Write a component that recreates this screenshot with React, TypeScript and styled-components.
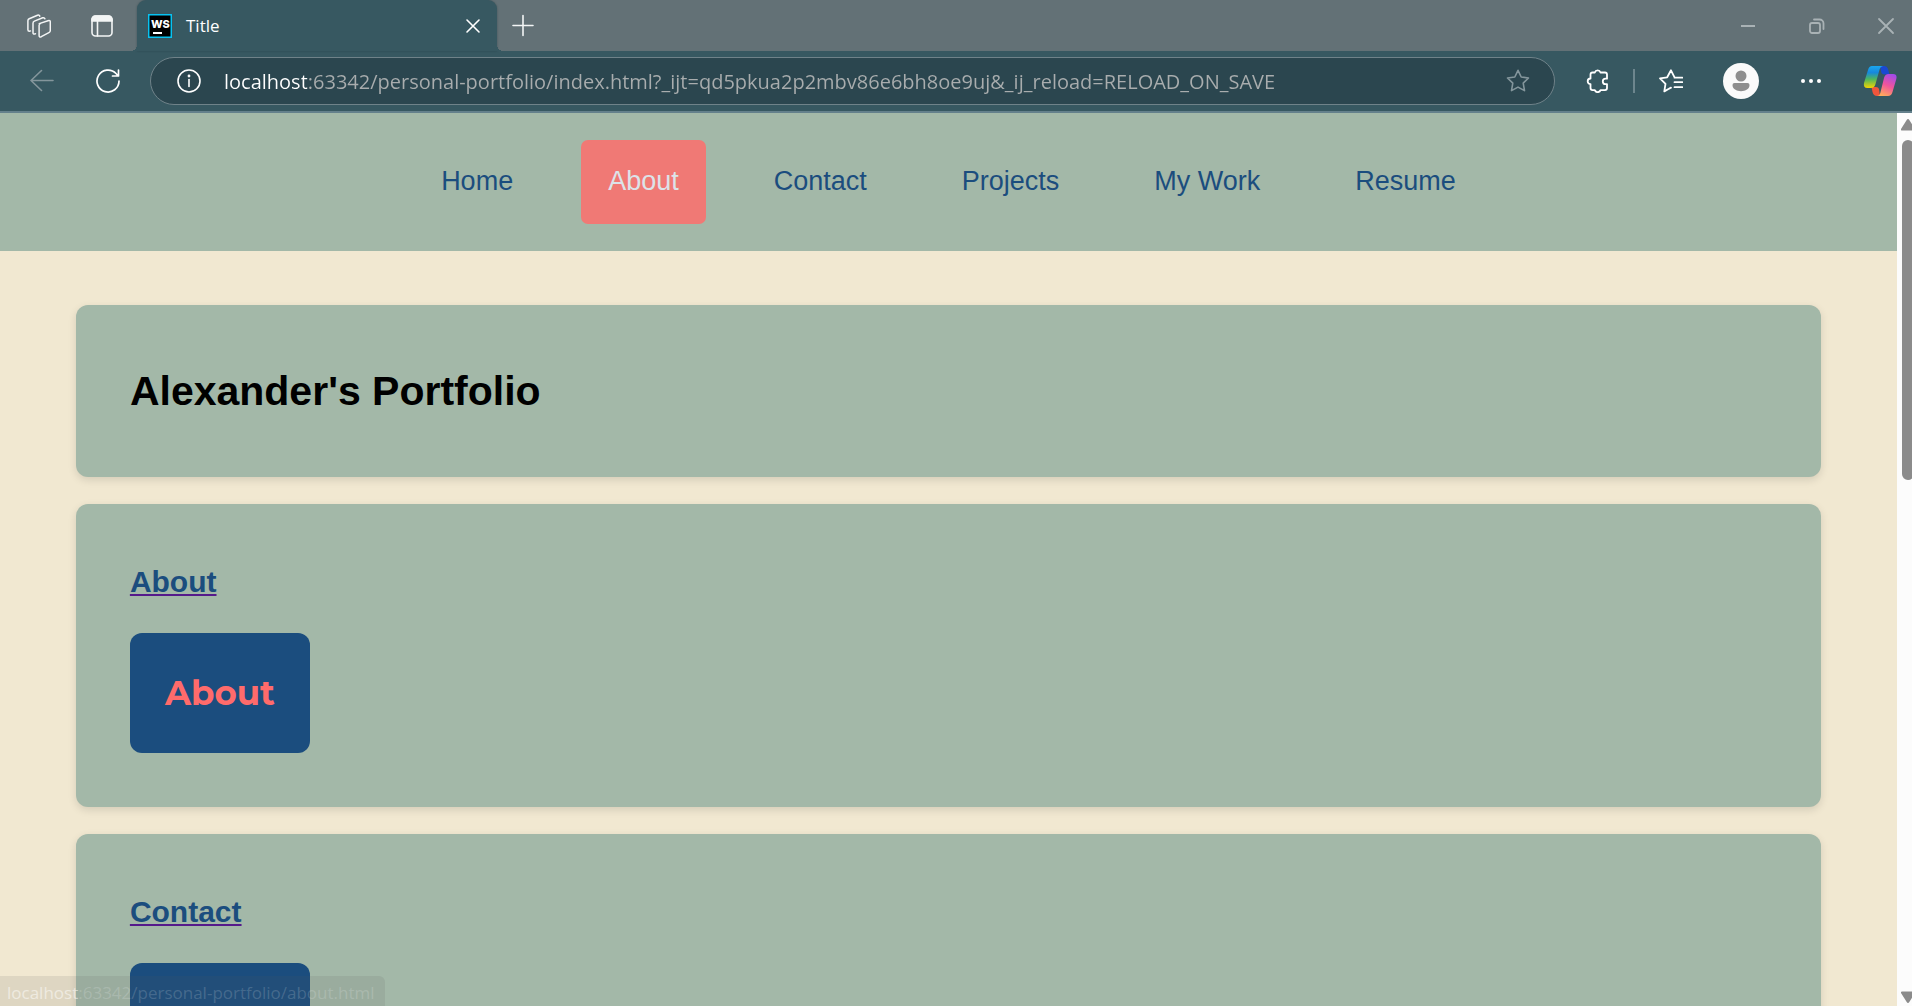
import React from "react";
import styled, { createGlobalStyle, css } from "styled-components";

const ui = '"Segoe UI", "Open Sans", "Noto Sans", sans-serif';
const navy = "#1b4d7e";
const sage = "#a3b8a8";

const GlobalStyle = createGlobalStyle`
  *, *::before, *::after { box-sizing: border-box; }
  body { margin: 0; background: #f1e8d1; font-family: "Liberation Sans", Arial, sans-serif; }
  button { border: 0; padding: 0; background: none; color: inherit; font: inherit; cursor: pointer; }
  svg { display: block; }
`;

const Window = styled.div`
  display: flex;
  flex-direction: column;
  height: 100vh;
  overflow: hidden;
`;

const TabStrip = styled.div`
  display: flex;
  align-items: center;
  height: 51px;
  flex: none;
  padding: 0 14px 0 27px;
  background: #637176;
  color: #f3f5f5;
  font-family: ${ui};
`;

const StripTools = styled.div`
  display: flex;
  gap: 39px;
  margin-right: 23px;
`;

const IconButton = styled.button<{ $dim?: boolean }>`
  display: flex;
  align-items: center;
  justify-content: center;
  flex: none;
  min-width: 24px;
  height: 24px;
  ${(p) => p.$dim && css`color: #84969c;`}
`;

const Tab = styled.div`
  position: relative;
  display: flex;
  align-items: center;
  gap: 14px;
  width: 360px;
  height: 51px;
  padding: 0 12px 0 11px;
  margin-right: 14px;
  border-radius: 9px 9px 0 0;
  background: #375861;
  color: #fff;
  box-shadow: 0 0 2px rgba(30, 50, 56, 0.5);
  font-size: 17px;
  line-height: 24px;

  &::before,
  &::after {
    content: "";
    position: absolute;
    bottom: 0;
    width: 6px;
    height: 6px;
  }
  &::before {
    left: -6px;
    background: radial-gradient(circle at 0 0, transparent 6px, #375861 6px);
  }
  &::after {
    right: -6px;
    background: radial-gradient(circle at 100% 0, transparent 6px, #375861 6px);
  }
`;

const TabTitle = styled.span`
  flex: 1;
`;

const WindowControls = styled.div`
  display: flex;
  gap: 45px;
  margin-left: auto;
  color: #a9b2b5;
`;

const Toolbar = styled.div`
  display: flex;
  align-items: center;
  height: 62px;
  flex: none;
  padding: 0 15px 0 30px;
  border-bottom: 2px solid #64808b;
  background: #375861;
  color: #fff;
  font-family: ${ui};
`;

const NavTools = styled.div`
  display: flex;
  gap: 42px;
  margin-right: 30px;
`;

const AddressBar = styled.form`
  display: flex;
  align-items: center;
  gap: 23px;
  flex: 1;
  height: 48px;
  padding: 0 24px 0 26px;
  border: 1px solid #6f8289;
  border-radius: 24px;
  background: #2b464f;
`;

const AddressInput = styled.input`
  flex: 1;
  min-width: 0;
  height: 30px;
  padding: 0;
  border: 0;
  outline: 0;
  font-family: ${ui};
  font-size: 20px;
  color: transparent;
  background: linear-gradient(to right, #fff 83px, #a9adae 83px);
  -webkit-background-clip: text;
  background-clip: text;
`;

const Extensions = styled.div`
  display: flex;
  align-items: center;
  gap: 23px;
  margin: 0 24px 0 31px;
`;

const Divider = styled.span`
  width: 2px;
  height: 24px;
  background: #6d868e;
`;

const Actions = styled.div`
  display: flex;
  align-items: center;
  gap: 40px;
`;

const Viewport = styled.div`
  position: relative;
  display: flex;
  flex: 1;
  min-height: 0;
`;

const Page = styled.div`
  flex: 1;
  overflow: hidden;
  background: #f1e8d1;
`;

const SiteNav = styled.nav`
  padding: 27px;
  background: ${sage};
`;

const NavList = styled.ul`
  display: flex;
  justify-content: center;
  gap: 41px;
  margin: 0;
  padding: 0;
  list-style: none;
`;

const NavLink = styled.a<{ $active?: boolean }>`
  display: block;
  padding: 26px 27px 28px;
  border-radius: 7px;
  font-size: 27px;
  line-height: 30px;
  text-decoration: none;
  color: ${(p) => (p.$active ? "#dce3e9" : navy)};
  background: ${(p) => (p.$active ? "#f07975" : "transparent")};
`;

const Main = styled.main`
  display: flex;
  flex-direction: column;
  gap: 27px;
  padding: 54px 4%;
`;

const Card = styled.section`
  padding: 54px;
  border-radius: 12px;
  background: ${sage};
  box-shadow: 0 3px 8px rgba(0, 0, 0, 0.12);
`;

const PageTitle = styled.h1`
  margin: 0;
  font-size: 41px;
  line-height: 64px;
  color: #000;
`;

const SectionLink = styled.a`
  color: #551a8b;
  text-decoration: underline;
  text-decoration-thickness: 2px;
  text-underline-offset: 2px;
`;

const SectionTitle = styled.h2`
  margin: 0 0 27px;
  font-size: 30px;
  line-height: 48px;

  span { color: ${navy}; }
`;

const SectionButton = styled.button`
  && {
    display: block;
    width: 180px;
    height: 120px;
    border-radius: 12px;
    background: ${navy};
    color: #ff6b6b;
    font-family: Montserrat, Inter, sans-serif;
    font-size: 34px;
    font-weight: 700;
    line-height: 34px;
  }
`;

const ScrollTrack = styled.div`
  display: flex;
  flex-direction: column;
  flex: none;
  width: 15px;
  padding: 6px 0 3px 4px;
  overflow: hidden;
  background: #fcfcfc;
  color: #8b8b8b;
`;

const ScrollThumb = styled.div`
  flex: none;
  width: 12px;
  height: 38.5%;
  margin: 9px 0 auto 1px;
  border-radius: 6px;
  background: #8b8b8b;
`;

const StatusBubble = styled.div`
  position: absolute;
  left: 0;
  bottom: 0;
  height: 30px;
  padding: 0 10px 0 7px;
  border-radius: 0 6px 0 0;
  background: rgba(90, 90, 90, 0.12);
  color: rgba(255, 255, 255, 0.17);
  font-family: ${ui};
  font-size: 17px;
  line-height: 33px;

  b { font-weight: 400; color: rgba(255, 255, 255, 0.5); }
`;

const Stroke = ({ size = 24, width = 1.6, children }: { size?: number; width?: number; children: React.ReactNode }) => (
  <svg width={size} height={size} viewBox={`0 0 ${size} ${size}`} fill="none" stroke="currentColor" strokeWidth={width} strokeLinecap="round" strokeLinejoin="round" aria-hidden="true">
    {children}
  </svg>
);

const Workspaces = () => (
  <Stroke width={1.5}>
    <path d="M12.2 9.6 21 6.7q2.3-.7 2.3 1.5v8.3q0 1.5-1.4 2.2l-7.6 4q-2.2 1-2.2-1.3V11.300q0-1.300 1.200-1.700Z" />
    <path d="M8.500 19.800 7.400 20.100Q6 20.200 6 18.700V9.200q0-1.500 1.400-2.100l8.300-3.300q1.700-.5 2.200 1" />
    <path d="M3.500 16.900 2.400 17.200Q.9 17.200.9 15.700V6.800q0-1.400 1.300-2L10.500 1.200q1.700-.6 2.300.9" />
  </Stroke>
);

const VerticalTabs = () => (
  <Stroke>
    <rect x="2" y="2" width="20" height="20" rx="3.500" />
    <path d="M2 7V5.500A3.500 3.500 0 0 1 5.500 2h13A3.500 3.500 0 0 1 22 5.500V7Z" fill="currentColor" />
    <path d="M7.500 7v15" />
  </Stroke>
);

const WebStormMark = () => (
  <svg width="24" height="24" viewBox="0 0 24 24" aria-hidden="true">
    <path fill="#07c3f2" d="M0 0h24v24H0z" />
    <path d="M1.500 1.500h21v21h-21z" />
    <text x="3" y="13.500" fill="#fff" fontFamily="Inter, sans-serif" fontWeight="800" fontSize="11">WS</text>
    <path fill="#fff" d="M5 18h9v2H5z" />
  </svg>
);

const star = "M12 1.300 15.200 8l7.300 1-5.300 5.100 1.300 7.500L12 18.100l-6.500 3.500 1.300-7.500L1.500 9l7.300-1Z";

const Puzzle = () => (
  <Stroke width={1.800}>
    <path d="M4.500 9.500V5.500q0-2 2-2h2.300a3 3 0 0 1 5.700 0H19q2 0 2 2v4.200h-1.500a2.700 2.700 0 0 0 0 5.400H21v4q0 2-2 2h-4.500a3 3 0 0 1-5.700 0H6.500q-2 0-2-2v-4a2.800 2.800 0 0 1 0-5.600Z" />
  </Stroke>
);

const FavoritesList = () => (
  <Stroke width={1.800}>
    <path d="M9.500 20 5.300 22.400l1.200-7.500L1 9.300l7.200-1L12 1.300l3.300 6.500M15.500 8.700h8M15.500 13.200h8M15.500 18.200h8M9.500 20l2.500-1.400" />
  </Stroke>
);

const Avatar = () => (
  <svg width="36" height="36" viewBox="0 0 36 36" aria-hidden="true">
    <circle cx="18" cy="18" r="18" fill="#fafafa" />
    <circle cx="18" cy="13" r="5.500" fill="#8e8e8e" />
    <path fill="#8e8e8e" d="M11.500 20h13q2 0 2 2c0 4-4 6.200-8.500 6.200S9.500 26 9.500 22q0-2 2-2Z" />
  </svg>
);

const Copilot = () => (
  <svg width="34" height="32" viewBox="0 0 34 32" aria-hidden="true">
    <defs>
      <linearGradient id="cool" x1="0" y1="0" x2="0" y2="1">
        <stop offset="0" stopColor="#1aa7ee" />
        <stop offset=".3" stopColor="#1688dd" />
        <stop offset=".6" stopColor="#4fb65c" />
        <stop offset="1" stopColor="#f5d500" />
      </linearGradient>
      <linearGradient id="warm" x1=".7" y1="0" x2=".3" y2="1">
        <stop offset="0" stopColor="#a44be8" />
        <stop offset=".5" stopColor="#f0549c" />
        <stop offset="1" stopColor="#ffab5a" />
      </linearGradient>
    </defs>
    <path fill="#1a49d2" d="M17 1h4q3 0 4 3l1.500 5.500h-4q-3 0-4-1.500Z" />
    <path fill="#f0553c" d="M8.500 22H13q2.500 0 3 2l1 7h-3q-3.500 0-4.500-4Z" />
    <path fill="url(#cool)" d="M9 1h11q-2.500.5-3.300 3L12.500 19q-1 4-4.500 4H4.500q-4.500 0-3.500-5L5 5q1-4 4-4Z" />
    <path fill="url(#warm)" d="M25.500 9H30q4.500 0 3.300 5l-3.800 13q-1 4-4.500 4H14q2.500 0 3.300-3L21 13q1-4 4.500-4Z" />
  </svg>
);

const links = ["Home", "About", "Contact", "Projects", "My Work", "Resume"];
const sections = ["About", "Contact"];

export default function App() {
  return (
    <Window>
      <GlobalStyle />
      <TabStrip>
        <StripTools>
          <IconButton aria-label="Workspaces"><Workspaces /></IconButton>
          <IconButton aria-label="Tab actions"><VerticalTabs /></IconButton>
        </StripTools>
        <Tab>
          <WebStormMark />
          <TabTitle>Title</TabTitle>
          <IconButton aria-label="Close tab"><Stroke><path d="m6 6 12 12M18 6 6 18" /></Stroke></IconButton>
        </Tab>
        <IconButton aria-label="New tab"><Stroke><path d="M2 11.500h20M12 1.500v20" /></Stroke></IconButton>
        <WindowControls>
          <IconButton aria-label="Minimize"><Stroke width={2}><path d="M5 12h14" strokeLinecap="butt" /></Stroke></IconButton>
          <IconButton aria-label="Restore"><Stroke width={1.800}><rect x="5" y="9" width="10" height="10" rx="2" /><path d="M9 5.500h5.500a4 4 0 0 1 4 4V15" /></Stroke></IconButton>
          <IconButton aria-label="Close"><Stroke width={1.800}><path d="m5 5 14 14M19 5 5 19" /></Stroke></IconButton>
        </WindowControls>
      </TabStrip>
      <Toolbar>
        <NavTools>
          <IconButton $dim aria-label="Back"><Stroke><path d="M23 11.500H1M11.500 1.500l-10.500 10 10.500 10" /></Stroke></IconButton>
          <IconButton aria-label="Refresh"><Stroke width={1.700}><path d="M23 12A11 11 0 1 1 20 4.500L22 6.700M22.500 1v6h-6" /></Stroke></IconButton>
        </NavTools>
        <AddressBar onSubmit={(e) => e.preventDefault()}>
          <IconButton type="button" aria-label="Site information">
            <Stroke><circle cx="12" cy="12" r="11" /><path d="M12 10.500v7" /><circle cx="12" cy="7" r=".6" fill="currentColor" /></Stroke>
          </IconButton>
          <AddressInput
            aria-label="Address"
            spellCheck={false}
            defaultValue="localhost:63342/personal-portfolio/index.html?_ijt=qd5pkua2p2mbv86e6bh8oe9uj&_ij_reload=RELOAD_ON_SAVE"
          />
          <IconButton type="button" $dim aria-label="Add to favorites"><Stroke><path d={star} /></Stroke></IconButton>
        </AddressBar>
        <Extensions>
          <IconButton aria-label="Extensions"><Puzzle /></IconButton>
          <Divider />
        </Extensions>
        <Actions>
          <IconButton aria-label="Favorites"><FavoritesList /></IconButton>
          <IconButton aria-label="Profile"><Avatar /></IconButton>
          <IconButton aria-label="Settings and more">
            <Stroke><g fill="currentColor" stroke="none"><circle cx="4" cy="12" r="2" /><circle cx="12" cy="12" r="2" /><circle cx="20" cy="12" r="2" /></g></Stroke>
          </IconButton>
          <IconButton aria-label="Copilot"><Copilot /></IconButton>
        </Actions>
      </Toolbar>
      <Viewport>
        <Page>
          <SiteNav>
            <NavList>
              {links.map((label) => (
                <li key={label}><NavLink href="#" $active={label === "About"}>{label}</NavLink></li>
              ))}
            </NavList>
          </SiteNav>
          <Main>
            <Card><PageTitle>Alexander's Portfolio</PageTitle></Card>
            {sections.map((name) => (
              <Card key={name}>
                <SectionTitle><SectionLink href="#"><span>{name}</span></SectionLink></SectionTitle>
                <SectionButton>{name}</SectionButton>
              </Card>
            ))}
          </Main>
        </Page>
        <ScrollTrack aria-hidden="true">
          <svg width="14" height="12" viewBox="0 0 14 12"><path fill="currentColor" d="M7 0q.8 0 1.300 1L14 10q.3 1.500-1 1.500H1Q-.3 11.500 0 10L5.700 1Q6.200 0 7 0Z" /></svg>
          <ScrollThumb />
          <svg width="14" height="12" viewBox="0 0 14 12"><path fill="currentColor" d="M7 12q.8 0 1.300-1L14 2q.3-1.500-1-1.500H1Q-.3.5 0 2l5.700 9q.5 1 1.300 1Z" /></svg>
        </ScrollTrack>
        <StatusBubble><b>localhost</b>:63342/personal-portfolio/about.html</StatusBubble>
      </Viewport>
    </Window>
  );
}
